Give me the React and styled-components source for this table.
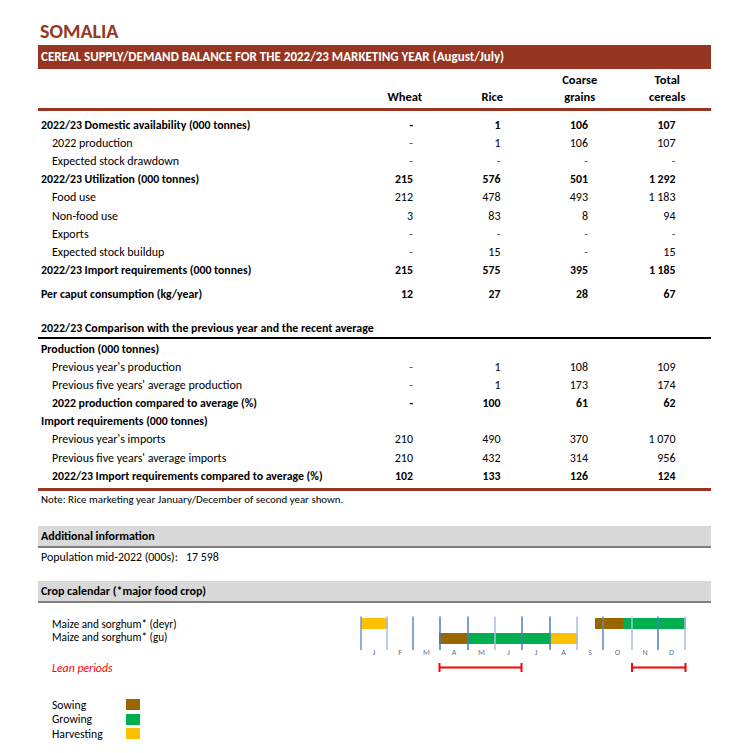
import React from 'react';
import styled, { createGlobalStyle } from 'styled-components';

const FONT = `"Carlito", "Lato", "Liberation Sans", sans-serif`;
const BROWN = '#963622';

const Global = createGlobalStyle`
  html, body { margin: 0; padding: 0; background: #fff; }
  body { font-family: ${FONT}; color: #000; }
`;

const Page = styled.div`
  width: 745px;
  height: 753px;
  box-sizing: border-box;
  padding: 18px 0 0 38px;
  overflow: hidden;
`;

const Sheet = styled.div`
  width: 673px;
`;

const Title = styled.h1`
  margin: 0;
  height: 27px;
  line-height: 26px;
  font-size: 20px;
  font-weight: 700;
  color: #953920;
  padding-left: 2px;
`;

const Banner = styled.div`
  height: 24px;
  line-height: 24px;
  background: ${BROWN};
  color: #fff;
  font-weight: 700;
  font-size: 13px;
  padding-left: 3px;
  white-space: nowrap;
`;

const HeadRow = styled.div`
  display: flex;
  align-items: flex-end;
  height: 36px;
  padding-bottom: 3px;
  border-bottom: 3px solid ${BROWN};
`;

const HeadSpacer = styled.div`
  flex: 1;
`;

const HeadCell = styled.div`
  width: 87.5px;
  text-align: center;
  font-weight: 700;
  font-size: 12.5px;
  line-height: 17px;
`;

const Section = styled.div`
  padding-top: ${(p) => p.$padTop || 0}px;
  padding-bottom: ${(p) => p.$padBottom || 0}px;
  border-bottom: ${(p) => (p.$rule ? `3px solid ${BROWN}` : 'none')};
`;

const Row = styled.div`
  display: flex;
  align-items: center;
  height: 18.1px;
  font-size: ${(p) => (p.$bold ? 11.8 : 12)}px;
  font-weight: ${(p) => (p.$bold ? 700 : 400)};
  margin-top: ${(p) => p.$gap || 0}px;
  white-space: nowrap;
`;

const Label = styled.div`
  flex: 1;
  padding-left: ${(p) => (p.$indent ? 14 : 3)}px;
`;

const Val = styled.div`
  width: 87.5px;
  box-sizing: border-box;
  padding-right: 35.5px;
  text-align: right;
  color: ${(p) => (p.$dash && !p.$bold ? '#555' : '#000')};
`;

const CompHeading = styled.div`
  margin-top: 16px;
  height: 18px;
  line-height: 18px;
  font-size: 11.9px;
  font-weight: 700;
  padding-left: 3px;
  border-bottom: 2px solid #000;
`;

const Note = styled.div`
  font-size: 10.9px;
  line-height: 17px;
  padding-left: 3px;
`;

const Band = styled.div`
  margin-top: ${(p) => p.$top}px;
  height: 20px;
  line-height: 20px;
  background: #d9d9d9;
  border-bottom: 2px solid #7f7f7f;
  font-size: 12px;
  font-weight: 700;
  padding-left: 3px;
`;

const Info = styled.div`
  font-size: 11.9px;
  line-height: 19px;
  padding-left: 3px;
`;

const Calendar = styled.div`
  display: flex;
  margin-top: 6px;
  height: 71px;
`;

const CalLabels = styled.div`
  width: 317px;
  box-sizing: border-box;
  padding: 9.5px 0 0 14px;
  font-size: 11.2px;
  line-height: 13px;
`;

const Lean = styled.div`
  margin-top: 18px;
  color: #ff0000;
  font-style: italic;
  font-size: 11.8px;
`;

const Legend = styled.div`
  margin-top: 17.75px;
  padding-left: 14px;
  display: flex;
  flex-direction: column;
`;

const LegendItem = styled.div`
  display: grid;
  grid-template-columns: 74px 14px;
  align-items: center;
  height: 14.5px;
  font-size: 11.7px;
`;

const Swatch = styled.span`
  width: 14px;
  height: 11px;
  background: ${(p) => p.$color};
`;

const SOW = '#996600';
const GROW = '#00b050';
const HARV = '#ffc000';

const rows1 = [
  { label: '2022/23 Domestic availability (000 tonnes)', bold: true, vals: ['-', '1', '106', '107'] },
  { label: '2022 production', indent: true, vals: ['-', '1', '106', '107'] },
  { label: 'Expected stock drawdown', indent: true, vals: ['-', '-', '-', '-'] },
  { label: '2022/23 Utilization  (000 tonnes)', bold: true, vals: ['215', '576', '501', '1 292'] },
  { label: 'Food use', indent: true, vals: ['212', '478', '493', '1 183'] },
  { label: 'Non-food use', indent: true, vals: ['3', '83', '8', '94'] },
  { label: 'Exports', indent: true, vals: ['-', '-', '-', '-'] },
  { label: 'Expected stock buildup', indent: true, vals: ['-', '15', '-', '15'] },
  { label: '2022/23 Import requirements  (000 tonnes)', bold: true, vals: ['215', '575', '395', '1 185'] },
  { label: 'Per caput consumption (kg/year)', bold: true, gap: 6, vals: ['12', '27', '28', '67'] },
];

const rows2 = [
  { label: 'Production (000 tonnes)', bold: true, vals: [] },
  { label: "Previous year's production", indent: true, vals: ['-', '1', '108', '109'] },
  { label: "Previous five years' average production", indent: true, vals: ['-', '1', '173', '174'] },
  { label: '2022 production compared to average (%)', indent: true, bold: true, vals: ['-', '100', '61', '62'] },
  { label: 'Import requirements (000 tonnes)', bold: true, vals: [] },
  { label: "Previous year's imports", indent: true, vals: ['210', '490', '370', '1 070'] },
  { label: "Previous five years' average imports", indent: true, vals: ['210', '432', '314', '956'] },
  { label: '2022/23 Import requirements compared to average (%)', indent: true, bold: true, vals: ['102', '133', '126', '124'] },
];

function DataRow({ r }) {
  return (
    <Row $bold={r.bold} $gap={r.gap}>
      <Label $indent={r.indent}>{r.label}</Label>
      {[0, 1, 2, 3].map((i) => (
        <Val key={i} $dash={r.vals[i] === '-'} $bold={r.bold}>
          {r.vals[i] || ''}
        </Val>
      ))}
    </Row>
  );
}

const lineX = [6, 32, 58, 85, 113, 140, 167, 195, 222, 248, 277, 303, 330];
const lineColor = ['#6f95c6', '#a9c0de', '#5f8ac0', '#4a7ebb', '#4a7ebb', '#a9c0de', '#4a7ebb', '#4a7ebb', '#a9c0de', '#5f8ac0', '#a9c0de', '#4a7ebb', '#a9c0de'];
const months = ['J', 'F', 'M', 'A', 'M', 'J', 'J', 'A', 'S', 'O', 'N', 'D'];

function CalendarChart() {
  return (
    <svg width="345" height="71" viewBox="0 -1 345 71">
      <rect x="6" y="8" width="27" height="11" fill={HARV} />
      <rect x="240" y="8" width="28" height="11" fill={SOW} />
      <rect x="268" y="8" width="63" height="11" fill={GROW} />
      <rect x="84" y="23" width="29" height="11" fill={SOW} />
      <rect x="113" y="23" width="83" height="11" fill={GROW} />
      <rect x="196" y="23" width="27" height="11" fill={HARV} />
      {lineX.map((x, i) => (
        <line key={i} x1={x} x2={x} y1="6.5" y2="40" stroke={lineColor[i]} strokeWidth="1.5" />
      ))}
      {months.map((m, i) => (
        <text
          key={i}
          x={(lineX[i] + lineX[i + 1]) / 2}
          y="45"
          fontSize="8"
          fill="#5a6f90"
          textAnchor="middle"
          fontFamily={FONT}
        >
          {m}
        </text>
      ))}
      <g stroke="#ff0000" strokeWidth="2">
        <line x1="84.5" x2="166.5" y1="57.5" y2="57.5" />
        <line x1="84.5" x2="84.5" y1="53" y2="62" />
        <line x1="166.5" x2="166.5" y1="53" y2="62" />
        <line x1="277" x2="330.5" y1="57.5" y2="57.5" />
        <line x1="277" x2="277" y1="53" y2="62" />
        <line x1="330.5" x2="330.5" y1="53" y2="62" />
      </g>
    </svg>
  );
}

export default function App() {
  return (
    <>
      <Global />
      <Page>
        <Sheet>
          <Title>SOMALIA</Title>
          <Banner>CEREAL SUPPLY/DEMAND BALANCE FOR THE 2022/23 MARKETING YEAR (August/July)</Banner>
          <HeadRow>
            <HeadSpacer />
            <HeadCell>Wheat</HeadCell>
            <HeadCell>Rice</HeadCell>
            <HeadCell>Coarse<br />grains</HeadCell>
            <HeadCell>Total<br />cereals</HeadCell>
          </HeadRow>
          <Section $padTop={5}>
            {rows1.map((r, i) => (
              <DataRow key={i} r={r} />
            ))}
          </Section>
          <CompHeading>2022/23 Comparison with the previous year and the recent average</CompHeading>
          <Section $padTop={1} $padBottom={3} $rule>
            {rows2.map((r, i) => (
              <DataRow key={i} r={r} />
            ))}
          </Section>
          <Note>Note: Rice marketing year January/December of second year shown.</Note>
          <Band $top={18}>Additional information</Band>
          <Info>Population mid-2022 (000s):&nbsp;&nbsp; 17 598</Info>
          <Band $top={14}>Crop calendar (*major food crop)</Band>
          <Calendar>
            <CalLabels>
              <div>Maize and sorghum* (deyr)</div>
              <div>Maize and sorghum* (gu)</div>
              <Lean>Lean periods</Lean>
            </CalLabels>
            <CalendarChart />
          </Calendar>
          <Legend>
            <LegendItem>
              <span>Sowing</span>
              <Swatch $color={SOW} />
            </LegendItem>
            <LegendItem>
              <span>Growing</span>
              <Swatch $color={GROW} />
            </LegendItem>
            <LegendItem>
              <span>Harvesting</span>
              <Swatch $color={HARV} />
            </LegendItem>
          </Legend>
        </Sheet>
      </Page>
    </>
  );
}
